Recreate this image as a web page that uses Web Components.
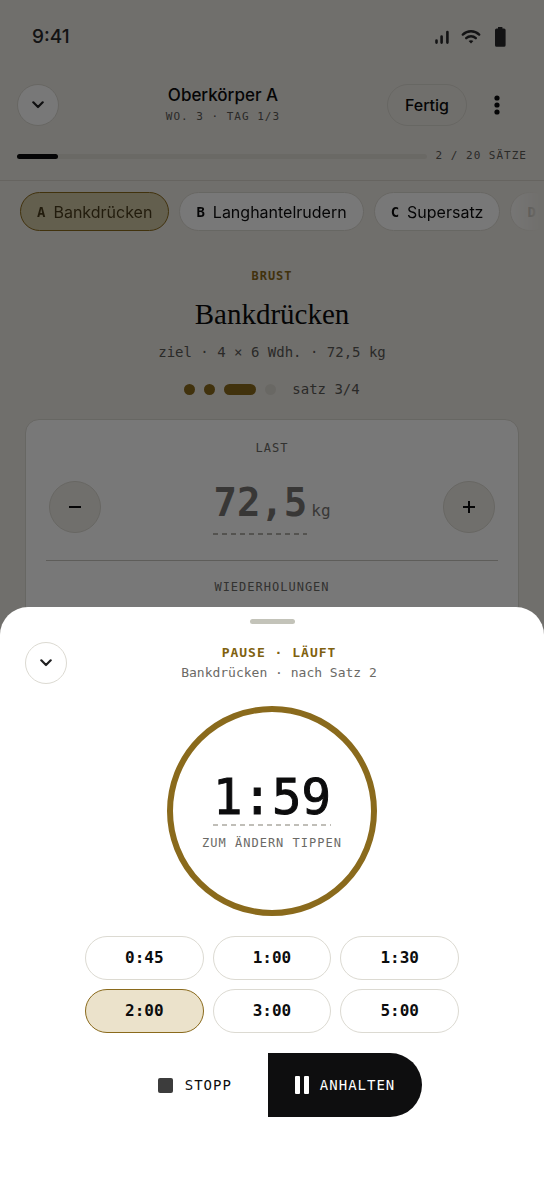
<!DOCTYPE html>
<html lang="de">
<head>
<meta charset="utf-8">
<meta name="viewport" content="width=device-width, initial-scale=1">
<title>Oberkörper A</title>
<style>
  :root {
    --paper: #efece6;
    --surface: #ffffff;
    --ink: #0c0c0d;
    --muted: #6b6a66;
    --line: #dcdad2;
    --gold: #8a6a1c;
    --gold-soft: #ebe2cb;
    --mono: "DejaVu Sans Mono", "Liberation Mono", monospace;
    --sans: Inter, "Liberation Sans", sans-serif;
    --serif: "Liberation Serif", serif;
  }
  body { margin: 0; font-family: var(--sans); color: var(--ink); background: var(--surface); }
</style>
</head>
<body>
<app-shell>
  <workout-page slot="page"></workout-page>
  <rest-sheet slot="sheet"></rest-sheet>
</app-shell>

<script>
const reset = `
  *, *::before, *::after { box-sizing: border-box; }
  button { margin: 0; padding: 0; border: 0; background: none; color: inherit; font: inherit; cursor: pointer; }
  svg { display: block; }
`;

function define(name, html, setup) {
  const template = document.createElement('template');
  template.innerHTML = html;
  customElements.define(name, class extends HTMLElement {
    constructor() {
      super();
      this.attachShadow({ mode: 'open' }).append(template.content.cloneNode(true));
    }
    connectedCallback() {
      if (setup) setup(this, this.shadowRoot);
    }
  });
}

/* Page, scrim and bottom sheet share one grid cell. */
define('app-shell', `
  <style>${reset}
    :host { display: grid; position: relative; height: 100vh; min-height: 620px; overflow: hidden; grid-template: minmax(0, 1fr) / minmax(0, 1fr); }
    .page, .sheet { grid-area: 1 / 1; min-width: 0; }
    .page { overflow: hidden; }
    .scrim { position: absolute; inset: 0; background: rgb(0 0 0 / 53%); }
    .sheet { position: relative; align-self: end; }
  </style>
  <div class="page"><slot name="page"></slot></div>
  <div class="scrim"></div>
  <div class="sheet"><slot name="sheet"></slot></div>
`);

define('status-bar', `
  <style>${reset}
    :host { display: flex; align-items: center; justify-content: space-between; padding: 24px 34px 0 32px; height: 50px; color: #29292b; }
    time { font-size: 19px; line-height: 24px; font-weight: 500; }
    .icons { display: flex; align-items: center; gap: 11px; }
  </style>
  <time>9:41</time>
  <div class="icons">
    <svg width="16" height="16" viewBox="0 0 16 16" stroke="currentColor" stroke-width="2.6" stroke-linecap="round"><path d="M2.5 11.6v2M7.6 7.6v6M13.4 3v10.6"/></svg>
    <svg width="20" height="16" viewBox="0 0 20 16" fill="none" stroke="currentColor" stroke-width="2.4" stroke-linecap="round"><path d="M1.8 5.6C6.4 1.2 13.6 1.2 18.2 5.6M5.2 9.2c2.7-2.6 6.9-2.6 9.6 0"/><path d="M10 14.6l-2.4-2.5c1.4-1.2 3.4-1.2 4.8 0z" fill="currentColor" stroke="none"/></svg>
    <svg width="18" height="20" viewBox="2 0 18 20" fill="currentColor"><path d="M8 0h4.400v1.400h1.600a1.600 1.600 0 0 1 1.600 1.600v15.200a1.600 1.600 0 0 1-1.600 1.600H6.600A1.600 1.600 0 0 1 5 18.200V3a1.600 1.600 0 0 1 1.600-1.600H8z"/></svg>
  </div>
`);

define('collapse-button', `
  <style>${reset}
    :host { display: block; }
    button { display: grid; place-items: center; width: 42px; height: 42px; border: 1px solid var(--line); border-radius: 50%; background: var(--surface); color: #202022; }
  </style>
  <button type="button" aria-label="Schließen">
    <svg width="12" height="8" viewBox="0 0 12 8" fill="none" stroke="currentColor" stroke-width="2.200" stroke-linecap="round" stroke-linejoin="round"><path d="M1.300 1.300 6 6l4.700-4.700"/></svg>
  </button>
`);

define('workout-header', `
  <style>${reset}
    :host { display: block; padding: 33px 17px 14px; border-bottom: 1px solid #d8d5cd; }
    .bar { display: flex; align-items: center; gap: 10px; padding-right: 10px; }
    .title { flex: 1; min-width: 0; text-align: center; }
    h1 { margin: 0; font-size: 17px; line-height: 24px; font-weight: 500; }
    p, .count { margin: 0; font: 11px/20px var(--mono); letter-spacing: 1px; color: #5a5956; }
    .done { height: 42px; padding: 0 17px; border: 1px solid var(--line); border-radius: 21px; font-size: 16px; font-weight: 500; }
    .more { display: grid; place-items: center; width: 40px; height: 42px; }
    .progress { display: flex; align-items: center; gap: 9px; margin-top: 19px; }
    .track { flex: 1; height: 5px; border-radius: 3px; background: #e2dfd6; }
    .fill { width: 10%; height: 100%; border-radius: 3px; background: var(--ink); }
  </style>
  <div class="bar">
    <collapse-button></collapse-button>
    <div class="title"><h1>Oberkörper A</h1><p>WO. 3 · TAG 1/3</p></div>
    <button class="done" type="button">Fertig</button>
    <button class="more" type="button" aria-label="Mehr">
      <svg width="6" height="20" viewBox="0 0 6 20" fill="currentColor"><circle cx="3" cy="3" r="2.600"/><circle cx="3" cy="10" r="2.600"/><circle cx="3" cy="17" r="2.600"/></svg>
    </button>
  </div>
  <div class="progress">
    <div class="track" role="progressbar" aria-valuenow="2" aria-valuemax="20"><div class="fill"></div></div>
    <span class="count">2 / 20 SÄTZE</span>
  </div>
`);

define('exercise-chip', `
  <style>${reset}
    :host { display: block; flex: none; }
    button { display: flex; align-items: center; gap: 8px; height: 39px; padding: 0 16px; border: 1px solid var(--line); border-radius: 20px; background: var(--surface); font-size: 16px; white-space: nowrap; }
    b { font: bold 14px/20px var(--mono); }
    :host([selected]) button { background: #d2c9a6; border-color: var(--gold); color: #4a3d1c; }
    :host([faded]) { opacity: .8; }
    :host([faded]) button { color: var(--muted); }
  </style>
  <button type="button"><b></b><slot></slot></button>
`, (host, root) => { root.querySelector('b').textContent = host.getAttribute('letter'); });

define('exercise-chips', `
  <style>${reset}
    :host { display: flex; gap: 10px; padding: 11px 0 11px 20px; overflow: hidden; -webkit-mask-image: linear-gradient(to left, transparent 4px, #000 36px); mask-image: linear-gradient(to left, transparent 4px, #000 36px); }
  </style>
  <slot></slot>
`);

define('set-summary', `
  <style>${reset}
    :host { display: flex; flex-direction: column; align-items: center; padding: 24px 20px 0; font-family: var(--mono); font-size: 14px; line-height: 20px; color: #5a5956; }
    .group { font-size: 12px; font-weight: bold; letter-spacing: 1px; color: var(--gold); }
    h2 { margin: 6px 0; font: 29px/44px var(--serif); color: var(--ink); }
    p { margin: 0; }
    .sets { display: flex; align-items: center; gap: 9px; margin-top: 17px; }
    i { width: 11px; height: 11px; border-radius: 6px; background: var(--gold); }
    i.current { width: 32px; }
    i.open { background: #e0ddd5; }
    .sets span { margin-left: 7px; }
  </style>
  <span class="group">BRUST</span>
  <h2>Bankdrücken</h2>
  <p>ziel · 4 × 6 Wdh. · 72,5 kg</p>
  <div class="sets"><i></i><i></i><i class="current"></i><i class="open"></i><span>satz 3/4</span></div>
`);

define('stepper-field', `
  <style>${reset}
    :host { display: block; text-align: center; font-family: var(--mono); color: #787673; }
    .label { font-size: 12px; line-height: 16px; letter-spacing: 1px; color: var(--muted); }
    .row { display: flex; align-items: center; justify-content: space-between; padding: 0 3px; margin-top: 23px; }
    .step { display: grid; place-items: center; width: 52px; height: 52px; border: 1px solid var(--line); border-radius: 50%; background: var(--paper); color: var(--ink); }
    .value { display: flex; align-items: baseline; gap: 4px; }
    .number { padding-bottom: 8px; font-size: 39px; line-height: 48px; font-weight: bold; background: repeating-linear-gradient(90deg, #b2b0aa 0 5px, transparent 5px 9px) bottom / 100% 2px no-repeat; }
    .unit { font-size: 16px; }
  </style>
  <div class="label"><slot></slot></div>
  <div class="row">
    <button class="step" type="button" aria-label="Weniger"><svg width="14" height="14" viewBox="0 0 14 14" stroke="currentColor" stroke-width="2"><path d="M1 7h12"/></svg></button>
    <button class="value" type="button"><span class="number"></span><span class="unit"></span></button>
    <button class="step" type="button" aria-label="Mehr"><svg width="14" height="14" viewBox="0 0 14 14" stroke="currentColor" stroke-width="2"><path d="M1 7h12M7 1v12"/></svg></button>
  </div>
`, (host, root) => {
  if (!host.hasAttribute('value')) { root.querySelector('.row').remove(); return; }
  root.querySelector('.number').textContent = host.getAttribute('value');
  root.querySelector('.unit').textContent = host.getAttribute('unit');
});

define('entry-card', `
  <style>${reset}
    :host { display: block; margin: 20px 25px 0; padding: 20px 20px 80px; border: 1px solid var(--line); border-radius: 14px; background: var(--surface); }
    hr { margin: 25px 0 18px; border: 0; border-top: 1px solid #c8c6c0; }
  </style>
  <stepper-field value="72,5" unit="kg">LAST</stepper-field>
  <hr>
  <stepper-field>WIEDERHOLUNGEN</stepper-field>
`);

define('workout-page', `
  <style>${reset}
    :host { display: block; min-height: 100vh; background: var(--paper); }
  </style>
  <status-bar></status-bar>
  <workout-header></workout-header>
  <exercise-chips>
    <exercise-chip letter="A" selected>Bankdrücken</exercise-chip>
    <exercise-chip letter="B">Langhantelrudern</exercise-chip>
    <exercise-chip letter="C">Supersatz</exercise-chip>
    <exercise-chip letter="D" faded></exercise-chip>
  </exercise-chips>
  <set-summary></set-summary>
  <entry-card></entry-card>
`);

define('rest-timer', `
  <style>${reset}
    :host { display: block; }
    button { display: flex; flex-direction: column; align-items: center; justify-content: center; width: 210px; height: 210px; border: 6px solid var(--gold); border-radius: 50%; font-family: var(--mono); }
    .time { font-size: 49px; line-height: 56px; background: repeating-linear-gradient(90deg, #c0beb8 0 5px, transparent 5px 9px) bottom / 100% 2px no-repeat; -webkit-text-stroke: 1px currentColor; }
    .hint { margin-top: 8px; font-size: 12px; line-height: 18px; letter-spacing: 1px; color: var(--muted); }
  </style>
  <button type="button"><span class="time">1:59</span><span class="hint">ZUM ÄNDERN TIPPEN</span></button>
`);

define('preset-button', `
  <style>${reset}
    :host { display: block; }
    button { width: 100%; height: 44px; border: 1px solid var(--line); border-radius: 22px; font: bold 16px/20px var(--mono); }
    :host([selected]) button { background: var(--gold-soft); border-color: var(--gold); }
  </style>
  <button type="button"><slot></slot></button>
`);

define('rest-sheet', `
  <style>${reset}
    :host { display: flex; flex-direction: column; align-items: center; padding: 12px 25px 65px; border-radius: 28px 28px 0 0; background: var(--surface); font-family: var(--mono); }
    .handle { width: 45px; height: 5px; border-radius: 3px; background: #c3c3b9; }
    header { display: grid; grid-template-columns: 42px 1fr 28px; gap: 12px; align-items: center; align-self: stretch; margin: 18px 0 22px; text-align: center; }
    h2 { margin: 0; font-size: 13px; line-height: 20px; letter-spacing: 1px; color: #80610f; }
    p { margin: 0; font-size: 13px; line-height: 20px; color: var(--muted); }
    .presets { display: grid; grid-template-columns: repeat(3, 1fr); gap: 9px; width: 100%; max-width: 374px; margin: 20px 0; }
    .actions { display: flex; }
    .actions button { display: flex; align-items: center; height: 64px; gap: 12px; padding: 0 36px; font-size: 14px; letter-spacing: 1px; }
    .actions .pause { gap: 11px; padding: 0 27px; border-radius: 0 32px 32px 0; background: #0e0e0f; color: #fff; }
  </style>
  <div class="handle"></div>
  <header>
    <collapse-button></collapse-button>
    <div><h2>PAUSE · LÄUFT</h2><p>Bankdrücken · nach Satz 2</p></div>
  </header>
  <rest-timer></rest-timer>
  <div class="presets">
    <preset-button>0:45</preset-button>
    <preset-button>1:00</preset-button>
    <preset-button>1:30</preset-button>
    <preset-button selected>2:00</preset-button>
    <preset-button>3:00</preset-button>
    <preset-button>5:00</preset-button>
  </div>
  <div class="actions">
    <button type="button"><svg width="15" height="15" viewBox="0 0 15 15"><rect width="15" height="15" rx="2" fill="#3c3c3c"/></svg>STOPP</button>
    <button class="pause" type="button"><svg width="14" height="18" viewBox="0 0 14 18" fill="currentColor"><rect width="5" height="18" rx="1"/><rect x="9" width="5" height="18" rx="1"/></svg>ANHALTEN</button>
  </div>
`);
</script>
</body>
</html>
